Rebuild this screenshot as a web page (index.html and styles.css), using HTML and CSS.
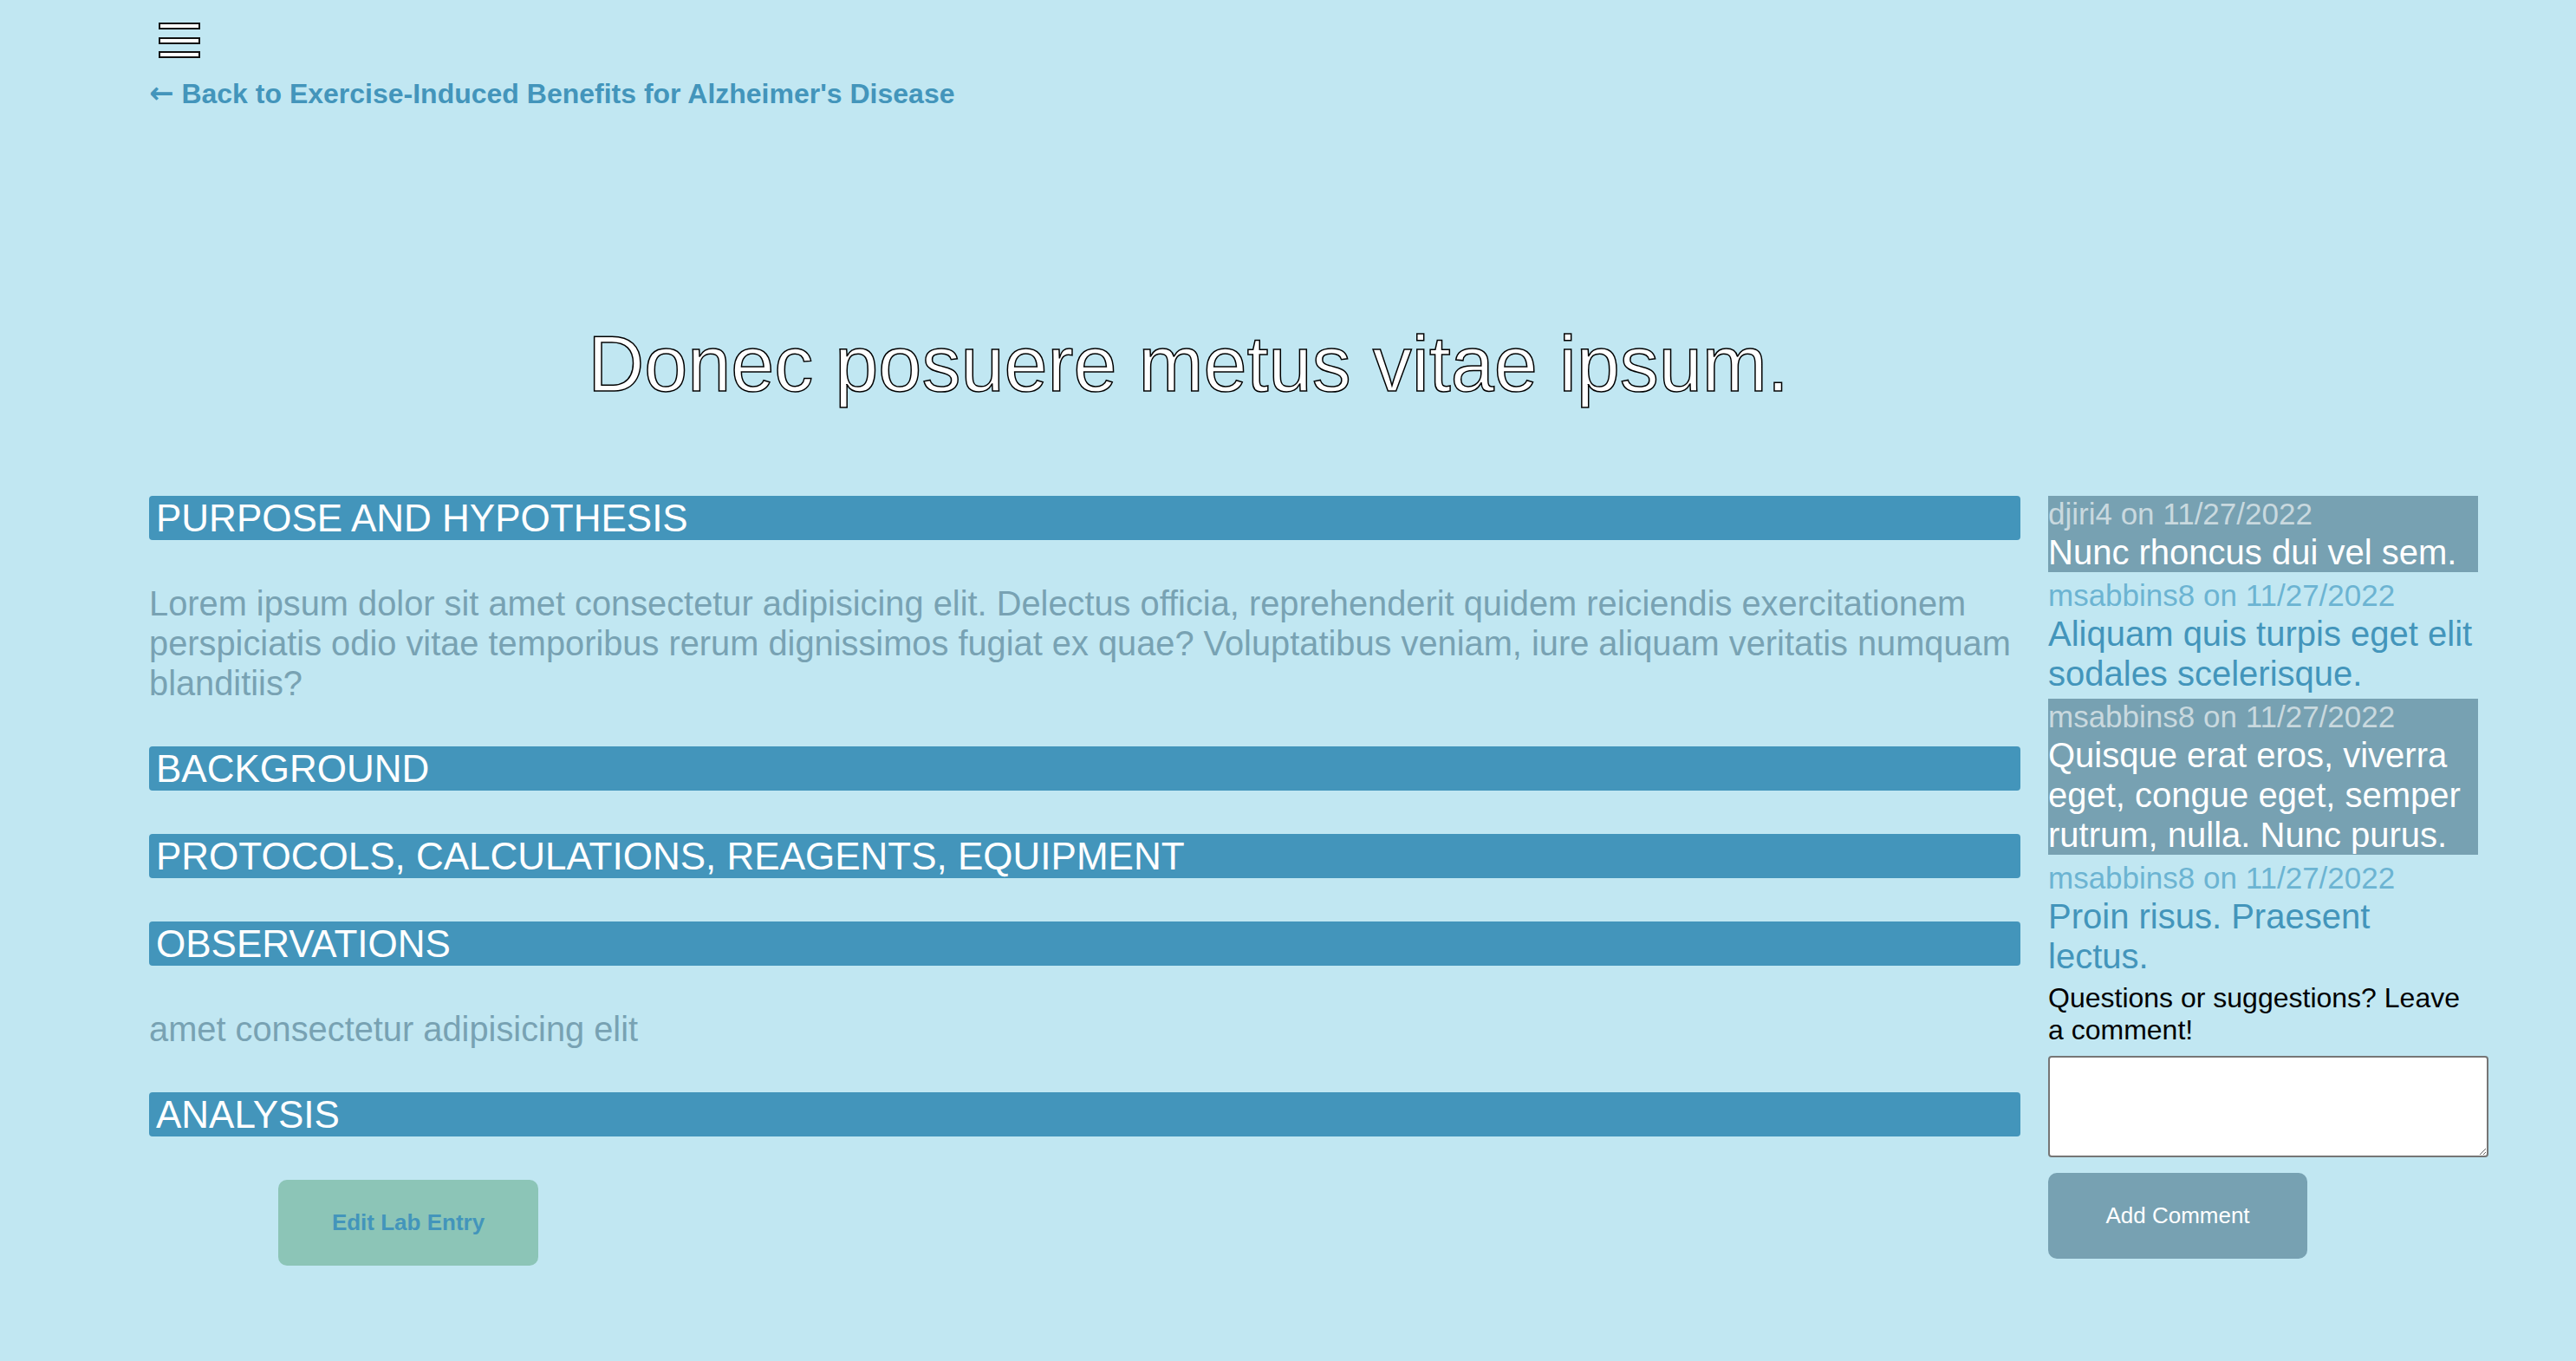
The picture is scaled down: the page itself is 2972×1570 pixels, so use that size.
FILE: index.html
```html
<!DOCTYPE html>
<html lang="en">
<head>
<meta charset="utf-8">
<title>Lab Entry</title>
<link rel="stylesheet" href="styles.css">
</head>
<body>
<div class="page">
  <header class="top">
    <button class="menu" aria-label="Menu"><span></span><span></span><span></span></button>
    <a class="back" href="#"><span class="arrow">&larr;</span> Back to Exercise-Induced Benefits for Alzheimer's Disease</a>
  </header>
  <h1 class="title">Donec posuere metus vitae ipsum.</h1>
  <div class="layout">
    <main class="entry">
      <h2 class="bar">PURPOSE AND HYPOTHESIS</h2>
      <p class="text">Lorem ipsum dolor sit amet consectetur adipisicing elit. Delectus officia, reprehenderit quidem reiciendis exercitationem perspiciatis odio vitae temporibus rerum dignissimos fugiat ex quae? Voluptatibus veniam, iure aliquam veritatis numquam blanditiis?</p>
      <h2 class="bar">BACKGROUND</h2>
      <h2 class="bar">PROTOCOLS, CALCULATIONS, REAGENTS, EQUIPMENT</h2>
      <h2 class="bar">OBSERVATIONS</h2>
      <p class="text">amet consectetur adipisicing elit</p>
      <h2 class="bar">ANALYSIS</h2>
      <button class="edit">Edit Lab Entry</button>
    </main>
    <aside class="comments">
      <div class="comment shaded">
        <div class="meta">djiri4 on 11/27/2022</div>
        <div class="body">Nunc rhoncus dui vel sem.</div>
      </div>
      <div class="comment">
        <div class="meta">msabbins8 on 11/27/2022</div>
        <div class="body">Aliquam quis turpis eget elit sodales scelerisque.</div>
      </div>
      <div class="comment shaded">
        <div class="meta">msabbins8 on 11/27/2022</div>
        <div class="body">Quisque erat eros, viverra eget, congue eget, semper rutrum, nulla. Nunc purus.</div>
      </div>
      <div class="comment">
        <div class="meta">msabbins8 on 11/27/2022</div>
        <div class="body">Proin risus. Praesent lectus.</div>
      </div>
      <p class="prompt">Questions or suggestions? Leave a comment!</p>
      <textarea class="box"></textarea>
      <button class="add">Add Comment</button>
    </aside>
  </div>
</div>
</body>
</html>
```

FILE: styles.css
```css
html, body {
  margin: 0;
  padding: 0;
  background: #c1e7f2;
}

body {
  font-family: "Liberation Sans", Arial, Helvetica, sans-serif;
  min-height: 1570px;
}

.page {
  padding: 0 113px 0 172px;
}

.top {
  padding-top: 26px;
  display: flex;
  flex-direction: column;
  align-items: flex-start;
}

.menu {
  display: flex;
  flex-direction: column;
  gap: 8.5px;
  margin: 0 0 0 11px;
  padding: 0;
  border: none;
  background: transparent;
}

.menu span {
  display: block;
  width: 48px;
  height: 8px;
  box-sizing: border-box;
  background: #fff;
  border: 2px solid #111;
}

.back {
  margin-top: 23px;
  height: 37px;
  line-height: 37px;
  font-size: 32px;
  font-weight: bold;
  color: #4395bb;
  text-decoration: none;
  white-space: nowrap;
}

.back .arrow {
  font-family: "DejaVu Sans", "Liberation Sans", sans-serif;
  font-size: 34px;
  line-height: 1;
  font-weight: bold;
}

.title {
  margin: 242px 0 0 0;
  padding-right: 289px;
  text-align: center;
  font-size: 90px;
  font-weight: normal;
  line-height: normal;
  color: #fff;
  -webkit-text-stroke: 1.5px #000;
}

.layout {
  margin-top: 100px;
  display: grid;
  grid-template-columns: 2159px 496px;
  column-gap: 32px;
  align-items: start;
}

.entry {
  display: flex;
  flex-direction: column;
  align-items: stretch;
  gap: 50px;
}

.bar {
  margin: 0;
  height: 51px;
  line-height: 51px;
  padding-left: 8px;
  font-size: 44px;
  font-weight: normal;
  color: #fff;
  background: #4395bb;
  border-radius: 4px;
}

.text {
  margin: 0;
  font-size: 39.8px;
  line-height: 46px;
  color: #78a2b3;
}

.edit {
  align-self: flex-start;
  margin-left: 149px;
  width: 300px;
  height: 99px;
  border: none;
  border-radius: 10px;
  background: #8cc5b7;
  color: #4395bb;
  font-family: "Liberation Sans", Arial, Helvetica, sans-serif;
  font-size: 26px;
  font-weight: bold;
}

.comments {
  display: flex;
  flex-direction: column;
  align-items: stretch;
  gap: 6px;
}

.comment .meta {
  font-size: 35px;
  line-height: 42px;
  color: #6cb4d2;
}

.comment .body {
  font-size: 40px;
  line-height: 46px;
  color: #4395bb;
}

.comment.shaded {
  background: #77a1b2;
}

.comment.shaded .meta {
  color: #c9d9df;
}

.comment.shaded .body {
  color: #fff;
}

.prompt {
  margin: 1px 0 0 0;
  font-size: 32px;
  line-height: 37px;
  color: #000;
}

.box {
  display: block;
  margin-top: 5px;
  width: 100%;
  height: 105px;
  box-sizing: content-box;
  padding: 4px;
  border: 2px solid #767676;
  border-radius: 4px;
  background: #fff;
}

.add {
  align-self: flex-start;
  margin-top: 12px;
  width: 299px;
  height: 99px;
  border: none;
  border-radius: 10px;
  background: #77a1b2;
  color: #fff;
  font-family: "Liberation Sans", Arial, Helvetica, sans-serif;
  font-size: 26px;
}
```
